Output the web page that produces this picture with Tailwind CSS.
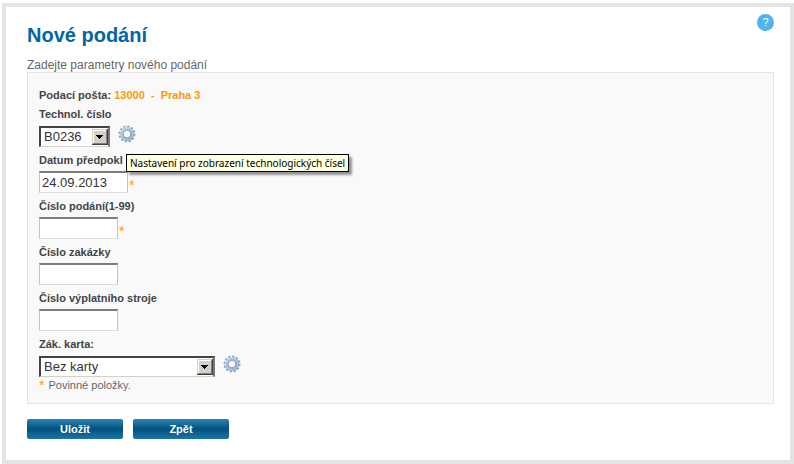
<!DOCTYPE html>
<html lang="cs">
<head>
    <meta charset="UTF-8">
    <meta name="viewport" content="width=device-width, initial-scale=1.0">
    <script src="https://cdn.jsdelivr.net/npm/@tailwindcss/browser@4"></script>
    <title>Nové podání</title>
</head>
<body class="bg-white pt-[3px] pl-0.5 font-['Liberation_Sans',Arial,sans-serif] text-[#666]">
    <svg class="block size-0">
        <defs>
            <linearGradient id="steel" x1="0" y1="0" x2="1" y2="1">
                <stop offset="0" stop-color="#c3daee"/>
                <stop offset="1" stop-color="#7f9fbe"/>
            </linearGradient>
        </defs>
        <symbol id="gear" viewBox="0 0 18 18">
            <circle cx="9" cy="9" r="7.5" fill="none" stroke="#86a2bd" stroke-width="2" stroke-dasharray="2.2 1.727"/>
            <circle cx="9" cy="9" r="5.4" fill="none" stroke="url(#steel)" stroke-width="3.2"/>
            <circle cx="9" cy="9" r="5.6" fill="none" stroke="#b4cde4" stroke-width="1"/>
            <circle cx="9" cy="9" r="3.9" fill="#f9f9f9" stroke="#7593b0" stroke-width=".9"/>
        </symbol>
        <symbol id="arrow" viewBox="0 0 16 16">
            <path fill="#d4d0c8" d="M0 0h16v16H0z"/>
            <path fill="#fff" d="M1 1h13v1H2v12H1z"/>
            <path fill="#808080" d="M14 1h1v14H1v-1h13z"/>
            <path fill="#404040" d="M15 0h1v16H0v-1h15z"/>
            <path fill="#000" d="M4 6h7v1h-1v1H9v1H8v1H7V9H6V8H5V7H4z"/>
        </symbol>
    </svg>

    <main class="border-4 border-[#e4e4e4] pt-[17px] pr-4 pb-[21px] pl-[21px]">
        <header class="flex justify-between">
            <h1 class="text-xl leading-[22px] font-bold text-[#0066a4]">Nové podání</h1>
            <a href="#" aria-label="Nápověda" class="-mt-2.5 flex size-[17px] items-center justify-center rounded-full bg-[#4fb3ee] text-[11px] leading-none text-white">?</a>
        </header>

        <form>
            <p class="mt-3 text-xs leading-[14px]">Zadejte parametry nového podání</p>

            <div class="border border-[#e4e4e4] bg-[#f9f9f9] px-[11px] pt-3 pb-2.5">
                <p class="pt-px text-[11px] leading-[18px] font-bold text-[#444]">Podací pošta: <span class="whitespace-pre text-[#ff9900]">13000  -  Praha 3</span></p>

                <div class="relative mb-[3px]">
                    <label for="techNumber" class="block text-[11px] leading-5 font-bold text-[#444]">Technol. číslo</label>
                    <div class="flex h-[23px] items-end">
                        <div class="relative">
                            <select id="techNumber" class="block h-[21px] w-[71px] appearance-none border-2 border-b border-t-[#444] border-r-[#777] border-b-[#d4d0c8] border-l-[#444] bg-white pl-[3px] text-[13px] leading-4 text-[#333]">
                                <option>B0236</option>
                            </select>
                            <svg class="pointer-events-none absolute top-0.5 right-0.5 h-[18px] w-4"><use href="#arrow"/></svg>
                        </div>
                        <button type="button" aria-label="Nastavení technologických čísel" class="mb-1 ml-2"><svg class="size-[18px]"><use href="#gear"/></svg></button>
                    </div>
                    <div role="tooltip" class="absolute top-[50px] left-[87px] border border-black bg-[#ffffe1] px-[3px] font-['Noto_Sans',sans-serif] text-[10px] leading-4 whitespace-nowrap text-black shadow-[3px_3px_2px_rgba(0,0,0,0.4)]">Nastavení pro zobrazení technologických čísel</div>
                </div>

                <div class="mb-[3px]">
                    <label for="date" class="block text-[11px] leading-5 font-bold text-[#444]">Datum předpokl</label>
                    <div class="flex h-[23px] items-end gap-px">
                        <input id="date" type="text" value="24.09.2013" class="h-[22px] w-[89px] border border-t-2 border-t-[#7c7c7c] border-r-[#c3c3c3] border-b-[#ddd] border-l-[#c3c3c3] bg-white px-0.5 text-[13px] text-[#333]">
                        <span class="text-sm leading-4 text-[#ff9900]">*</span>
                    </div>
                </div>

                <div class="mb-[3px]">
                    <label for="number" class="block text-[11px] leading-5 font-bold text-[#444]">Číslo podání(1-99)</label>
                    <div class="flex h-[23px] items-end gap-px">
                        <input id="number" type="text" class="h-[22px] w-[79px] border border-t-2 border-t-[#7c7c7c] border-r-[#c3c3c3] border-b-[#ddd] border-l-[#c3c3c3] bg-white px-0.5 text-[13px] text-[#333]">
                        <span class="text-sm leading-4 text-[#ff9900]">*</span>
                    </div>
                </div>

                <div class="mb-[3px]">
                    <label for="order" class="block text-[11px] leading-5 font-bold text-[#444]">Číslo zakázky</label>
                    <div class="flex h-[23px] items-end">
                        <input id="order" type="text" class="h-[22px] w-[79px] border border-t-2 border-t-[#7c7c7c] border-r-[#c3c3c3] border-b-[#ddd] border-l-[#c3c3c3] bg-white px-0.5 text-[13px] text-[#333]">
                    </div>
                </div>

                <div class="mb-[3px]">
                    <label for="machine" class="block text-[11px] leading-5 font-bold text-[#444]">Číslo výplatního stroje</label>
                    <div class="flex h-[23px] items-end">
                        <input id="machine" type="text" class="h-[22px] w-[79px] border border-t-2 border-t-[#7c7c7c] border-r-[#c3c3c3] border-b-[#ddd] border-l-[#c3c3c3] bg-white px-0.5 text-[13px] text-[#333]">
                    </div>
                </div>

                <div>
                    <label for="card" class="block text-[11px] leading-5 font-bold text-[#444]">Zák. karta:</label>
                    <div class="flex h-[23px] items-end">
                        <div class="relative">
                            <select id="card" class="block h-[21px] w-44 appearance-none border-2 border-b border-t-[#444] border-r-[#777] border-b-[#d4d0c8] border-l-[#444] bg-white pl-[3px] text-[13px] leading-4 text-[#333]">
                                <option>Bez karty</option>
                            </select>
                            <svg class="pointer-events-none absolute top-0.5 right-0.5 h-[18px] w-4"><use href="#arrow"/></svg>
                        </div>
                        <button type="button" aria-label="Nastavení karty" class="mb-1 ml-2"><svg class="size-[18px]"><use href="#gear"/></svg></button>
                    </div>
                </div>

                <p class="flex gap-1 text-[11px] leading-4"><span class="text-sm leading-4 text-[#ff9900]">*</span> Povinné položky.</p>
            </div>

            <div class="mt-[15px] flex gap-2.5">
                <button type="submit" class="h-5 w-24 rounded-xs bg-linear-to-b from-[#2b83b3] via-[#00527f] to-[#1d75a5] text-[11px] font-bold text-white">Uložit</button>
                <button type="button" class="h-5 w-24 rounded-xs bg-linear-to-b from-[#2b83b3] via-[#00527f] to-[#1d75a5] text-[11px] font-bold text-white">Zpět</button>
            </div>
        </form>
    </main>
</body>
</html>
